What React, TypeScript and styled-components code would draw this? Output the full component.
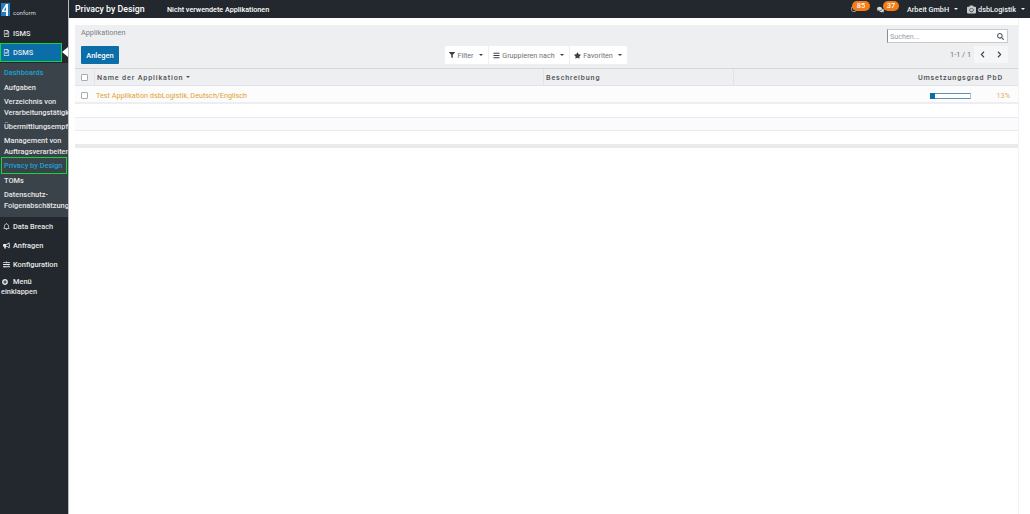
import React from 'react';
import styled, {createGlobalStyle} from 'styled-components';
import {
  FaBars,
  FaBullhorn,
  FaCamera,
  FaChevronLeft,
  FaChevronRight,
  FaComments,
  FaFilter,
  FaPlusCircle,
  FaRegBell,
  FaRegClock,
  FaRegFileAlt,
  FaSearch,
  FaSlidersH,
  FaStar,
} from 'react-icons/fa';

const GlobalStyle = createGlobalStyle`
  html, body {
    margin: 0;
    padding: 0;
    height: 100%;
    background: #fff;
    font-family: Roboto, "Liberation Sans", sans-serif;
  }
  #root { height: 100%; }
  * { box-sizing: border-box; }
`;

const Page = styled.div`
  position: relative;
  display: grid;
  grid-template-columns: 69px 1fr;
  width: 1030px;
  height: 514px;
  overflow: hidden;
  background: #fff;
`;

const Sidebar = styled.aside`
  background: #22282d;
  overflow: hidden;
  border-right: 1px solid #b9bcbf;
`;

const Logo = styled.div`
  display: flex;
  align-items: flex-end;
  gap: 3px;
  height: 24px;
  padding: 3px 0 8px 1px;
`;

const LogoText = styled.span`
  color: #d8dadc;
  font-size: 6px;
  line-height: 6px;
`;

const NavItem = styled.div<{$active?: boolean}>`
  position: relative;
  display: flex;
  align-items: center;
  gap: 3px;
  width: 62px;
  height: 19px;
  padding-left: 3px;
  color: #e6e7e8;
  font-size: 7.4px;
  font-weight: 500;
  white-space: nowrap;
  background: ${({$active}) => ($active ? '#0b6ea8' : 'transparent')};
  outline: ${({$active}) => ($active ? '1.5px solid #13d63a' : 'none')};
  outline-offset: -1px;
  svg { width: 7px; flex: none; }
`;

const ActiveArrow = styled.span`
  position: absolute;
  right: -6px;
  top: 4px;
  border-top: 5px solid transparent;
  border-bottom: 5px solid transparent;
  border-right: 6px solid #fff;
`;

const SubMenu = styled.div`
  background: #3a424a;
  margin-top: 1px;
  padding-top: 2px;
  height: 154px;
`;

const SubItem = styled.div<{$tall?: boolean; $current?: boolean; $marked?: boolean}>`
  display: flex;
  align-items: center;
  height: ${({$tall}) => ($tall ? '24px' : '15px')};
  margin: ${({$marked}) => ($marked ? '0 2px' : '0')};
  padding-left: ${({$marked}) => ($marked ? '2px' : '4px')};
  color: ${({$current}) => ($current ? '#19a3d8' : '#e6e7e8')};
  font-size: 7.4px;
  font-weight: 500;
  line-height: 11px;
  white-space: nowrap;
  outline: ${({$marked}) => ($marked ? '1.5px solid #13d63a' : 'none')};
`;

const CollapseItem = styled.div`
  color: #e6e7e8;
  font-size: 7.4px;
  font-weight: 500;
  line-height: 10px;
  padding: 3px 0 0 1px;
`;

const CollapseLine = styled.div`
  display: flex;
  align-items: center;
  gap: 5px;
  padding-left: 1px;
  svg { width: 6px; }
`;

const Main = styled.div`
  display: flex;
  flex-direction: column;
  min-width: 0;
`;

const TopBar = styled.header`
  display: flex;
  align-items: center;
  height: 18px;
  background: #22282d;
  color: #fff;
  padding-left: 6px;
`;

const AppTitle = styled.span`
  font-size: 8.8px;
  font-weight: 500;
  width: 92px;
`;

const TopLink = styled.span`
  font-size: 7.2px;
  font-weight: 500;
`;

const TopRight = styled.div`
  display: flex;
  align-items: center;
  margin-left: auto;
  padding-right: 5px;
`;

const Notify = styled.div<{$space: number}>`
  position: relative;
  display: flex;
  align-items: center;
  width: ${({$space}) => $space}px;
  height: 18px;
  color: #d5d7d9;
`;

const Badge = styled.span<{$left: number; $width: number}>`
  position: absolute;
  left: ${({$left}) => $left}px;
  top: 1px;
  width: ${({$width}) => $width}px;
  height: 10px;
  border-radius: 5px;
  background: #f47b16;
  color: #fff;
  font-size: 7.5px;
  font-weight: 500;
  line-height: 10px;
  text-align: center;
`;

const TopMenu = styled.span<{$space: number}>`
  display: flex;
  align-items: center;
  gap: 2px;
  margin-right: ${({$space}) => $space}px;
  font-size: 7.3px;
  font-weight: 500;
  color: #f0f1f2;
`;

const Caret = styled.i<{$color?: string}>`
  display: inline-block;
  margin-left: 3px;
  border-top: 2.5px solid ${({$color}) => $color ?? 'currentColor'};
  border-left: 2.5px solid transparent;
  border-right: 2.5px solid transparent;
`;

const Content = styled.main`
  flex: 1;
  padding: 7px 12px 0 6px;
`;

const ControlPanel = styled.section`
  display: grid;
  grid-template-columns: 1fr auto 1fr;
  height: 43px;
  background: #eeeff1;
  padding: 3px 10px 0 6px;
`;

const LeftControls = styled.div`
  display: flex;
  flex-direction: column;
  align-items: flex-start;
  gap: 8px;
`;

const Breadcrumb = styled.span`
  font-size: 7.3px;
  color: #7b7f83;
  line-height: 10px;
`;

const PrimaryButton = styled.button`
  width: 38px;
  height: 18px;
  padding: 0;
  border: 0;
  border-radius: 1px;
  background: #0b6ea8;
  color: #fff;
  font: 500 7.5px Roboto, sans-serif;
`;

const SearchOptions = styled.div`
  display: flex;
  align-items: flex-end;
  gap: 1px;
  padding: 0 18px 4px 0;
`;

const OptionButton = styled.div<{$width: number}>`
  display: flex;
  align-items: center;
  justify-content: center;
  gap: 2px;
  width: ${({$width}) => $width}px;
  height: 18px;
  background: #fff;
  border-radius: 1px;
  color: #6d7175;
  font-size: 7.2px;
  svg { color: #3c4043; }
`;

const RightControls = styled.div`
  display: flex;
  flex-direction: column;
  align-items: flex-end;
  gap: 3px;
  margin-top: 1px;
`;

const SearchBox = styled.div`
  display: flex;
  align-items: center;
  justify-content: space-between;
  width: 121px;
  height: 14px;
  padding: 0 3px 0 2px;
  background: #fff;
  border: 1px solid #c9cbce;
  border-left: 1px solid #8a8d90;
  color: #9a9da0;
  font-size: 7.2px;
  svg { color: #55595d; }
`;

const Pager = styled.div`
  display: flex;
  align-items: center;
  gap: 3px;
  font-size: 7.3px;
  color: #6d7175;
`;

const PagerButtons = styled.div`
  display: flex;
  background: #f5f6f7;
`;

const PagerButton = styled.span`
  display: flex;
  align-items: center;
  justify-content: center;
  width: 17px;
  height: 17px;
  color: #3c4043;
`;

const Table = styled.div`
  display: flex;
  flex-direction: column;
`;

const HeaderRow = styled.div`
  display: grid;
  grid-template-columns: 19px 449px 190px 1fr;
  height: 18px;
  background: #eeeff1;
  border-top: 1px solid #d4d6d8;
  border-bottom: 1px solid #e0e2ec;
`;

const HeaderCell = styled.div<{$right?: boolean}>`
  display: flex;
  align-items: center;
  justify-content: ${({$right}) => ($right ? 'flex-end' : 'flex-start')};
  padding: ${({$right}) => ($right ? '0 15px 0 0' : '0 0 0 2px')};
  border-left: 1px solid #e2e3e5;
  color: #4d5155;
  font-size: 7.2px;
  font-weight: 500;
  letter-spacing: 0.85px;
  white-space: nowrap;
`;

const BoxCell = styled.div<{$up?: boolean}>`
  display: flex;
  align-items: center;
  justify-content: center;
  padding-right: 1px;
  margin-top: ${({$up}) => ($up ? '-1px' : '0')};
`;

const CheckBox = styled.span`
  display: block;
  width: 7px;
  height: 7px;
  background: #fff;
  border: 1px solid #a9acaf;
  border-radius: 1px;
`;

const DataRow = styled.div`
  display: grid;
  grid-template-columns: 19px 1fr auto 39px;
  align-items: center;
  height: 18px;
  padding: 3px 8px 0 0;
  background: #fcfcfd;
  border-bottom: 2px solid #eeeef2;
`;

const AppName = styled.span`
  padding-left: 2px;
  color: #e0a030;
  font-size: 7.25px;
`;

const ProgressTrack = styled.div`
  width: 41px;
  height: 6px;
  background: #fff;
  border: 1px solid #5f8fb8;
  border-right-color: #a9c2da;
`;

const ProgressFill = styled.div`
  height: 6px;
  background: #0b6ea8;
  margin: -1px 0 0 -1px;
`;

const Percent = styled.span`
  color: #e3b05c;
  font-size: 7.3px;
  text-align: right;
`;

const EmptyRow = styled.div<{$striped?: boolean; $height: number}>`
  height: ${({$height}) => $height}px;
  background: ${({$striped}) => ($striped ? '#fbfbfd' : '#fff')};
  border-bottom: 1px solid #eaeaef;
`;

const TableFoot = styled.div`
  height: 3px;
  background: #e9eaeb;
`;

const PageEdge = styled.div`
  position: absolute;
  top: 18px;
  right: 11px;
  bottom: 0;
  width: 1px;
  background: #f3f3f5;
`;

const PROGRESS = 13;

const App = () => (
  <Page>
    <GlobalStyle />
    <Sidebar>
      <Logo>
        <svg width="9" height="13" viewBox="0 0 9 13">
          <rect width="9" height="13" fill="#1f7fc4" />
          <path d="M5 1 H7 V13 H5 V9 H1 V7.5 Z M5 4 L2.8 7.5 H5 Z" fill="#f4f6f8" fillRule="evenodd" />
        </svg>
        <LogoText>conform</LogoText>
      </Logo>
      <NavItem>
        <FaRegFileAlt size={7} />
        ISMS
      </NavItem>
      <NavItem $active>
        <FaRegFileAlt size={7} />
        DSMS
        <ActiveArrow />
      </NavItem>
      <SubMenu>
        <SubItem $current>Dashboards</SubItem>
        <SubItem>Aufgaben</SubItem>
        <SubItem $tall>
          Verzeichnis von
          <br />
          Verarbeitungstätigkeiten
        </SubItem>
        <SubItem>Übermittlungsempfänger</SubItem>
        <SubItem $tall>
          Management von
          <br />
          Auftragsverarbeitern
        </SubItem>
        <SubItem $current $marked>
          Privacy by Design
        </SubItem>
        <SubItem>TOMs</SubItem>
        <SubItem $tall>
          Datenschutz-
          <br />
          Folgenabschätzungen
        </SubItem>
      </SubMenu>
      <NavItem>
        <FaRegBell size={7} />
        Data Breach
      </NavItem>
      <NavItem>
        <FaBullhorn size={7} />
        Anfragen
      </NavItem>
      <NavItem>
        <FaSlidersH size={7} />
        Konfiguration
      </NavItem>
      <CollapseItem>
        <CollapseLine>
          <FaPlusCircle size={6} />
          Menü
        </CollapseLine>
        einklappen
      </CollapseItem>
    </Sidebar>
    <Main>
      <TopBar>
        <AppTitle>Privacy by Design</AppTitle>
        <TopLink>Nicht verwendete Applikationen</TopLink>
        <TopRight>
          <Notify $space={26}>
            <FaRegClock size={6} />
            <Badge $left={1} $width={18}>
              85
            </Badge>
          </Notify>
          <Notify $space={30}>
            <FaComments size={7} />
            <Badge $left={6} $width={16}>
              37
            </Badge>
          </Notify>
          <TopMenu $space={9}>
            Arbeit GmbH
            <Caret />
          </TopMenu>
          <TopMenu $space={0}>
            <FaCamera size={9} color="#c8cacc" />
            dsbLogistik
            <Caret />
          </TopMenu>
        </TopRight>
      </TopBar>
      <Content>
        <ControlPanel>
          <LeftControls>
            <Breadcrumb>Applikationen</Breadcrumb>
            <PrimaryButton>Anlegen</PrimaryButton>
          </LeftControls>
          <SearchOptions>
            <OptionButton $width={43}>
              <FaFilter size={6} />
              Filter
              <Caret $color="#3c4043" />
            </OptionButton>
            <OptionButton $width={80}>
              <FaBars size={7} />
              Gruppieren nach
              <Caret $color="#3c4043" />
            </OptionButton>
            <OptionButton $width={57}>
              <FaStar size={7} />
              Favoriten
              <Caret $color="#3c4043" />
            </OptionButton>
          </SearchOptions>
          <RightControls>
            <SearchBox>
              Suchen...
              <FaSearch size={7} />
            </SearchBox>
            <Pager>
              1-1 / 1
              <PagerButtons>
                <PagerButton>
                  <FaChevronLeft size={7} />
                </PagerButton>
                <PagerButton>
                  <FaChevronRight size={7} />
                </PagerButton>
              </PagerButtons>
            </Pager>
          </RightControls>
        </ControlPanel>
        <Table>
          <HeaderRow>
            <BoxCell>
              <CheckBox />
            </BoxCell>
            <HeaderCell>
              Name der Applikation
              <Caret />
            </HeaderCell>
            <HeaderCell>Beschreibung</HeaderCell>
            <HeaderCell $right>Umsetzungsgrad PbD</HeaderCell>
          </HeaderRow>
          <DataRow>
            <BoxCell $up>
              <CheckBox />
            </BoxCell>
            <AppName>Test Applikation dsbLogistik, Deutsch/Englisch</AppName>
            <ProgressTrack>
              <ProgressFill style={{width: `${PROGRESS}%`}} />
            </ProgressTrack>
            <Percent>{PROGRESS}%</Percent>
          </DataRow>
          <EmptyRow $height={14} />
          <EmptyRow $height={13} $striped />
          <EmptyRow $height={14} />
          <TableFoot />
        </Table>
      </Content>
    </Main>
    <PageEdge />
  </Page>
);

export default App;
